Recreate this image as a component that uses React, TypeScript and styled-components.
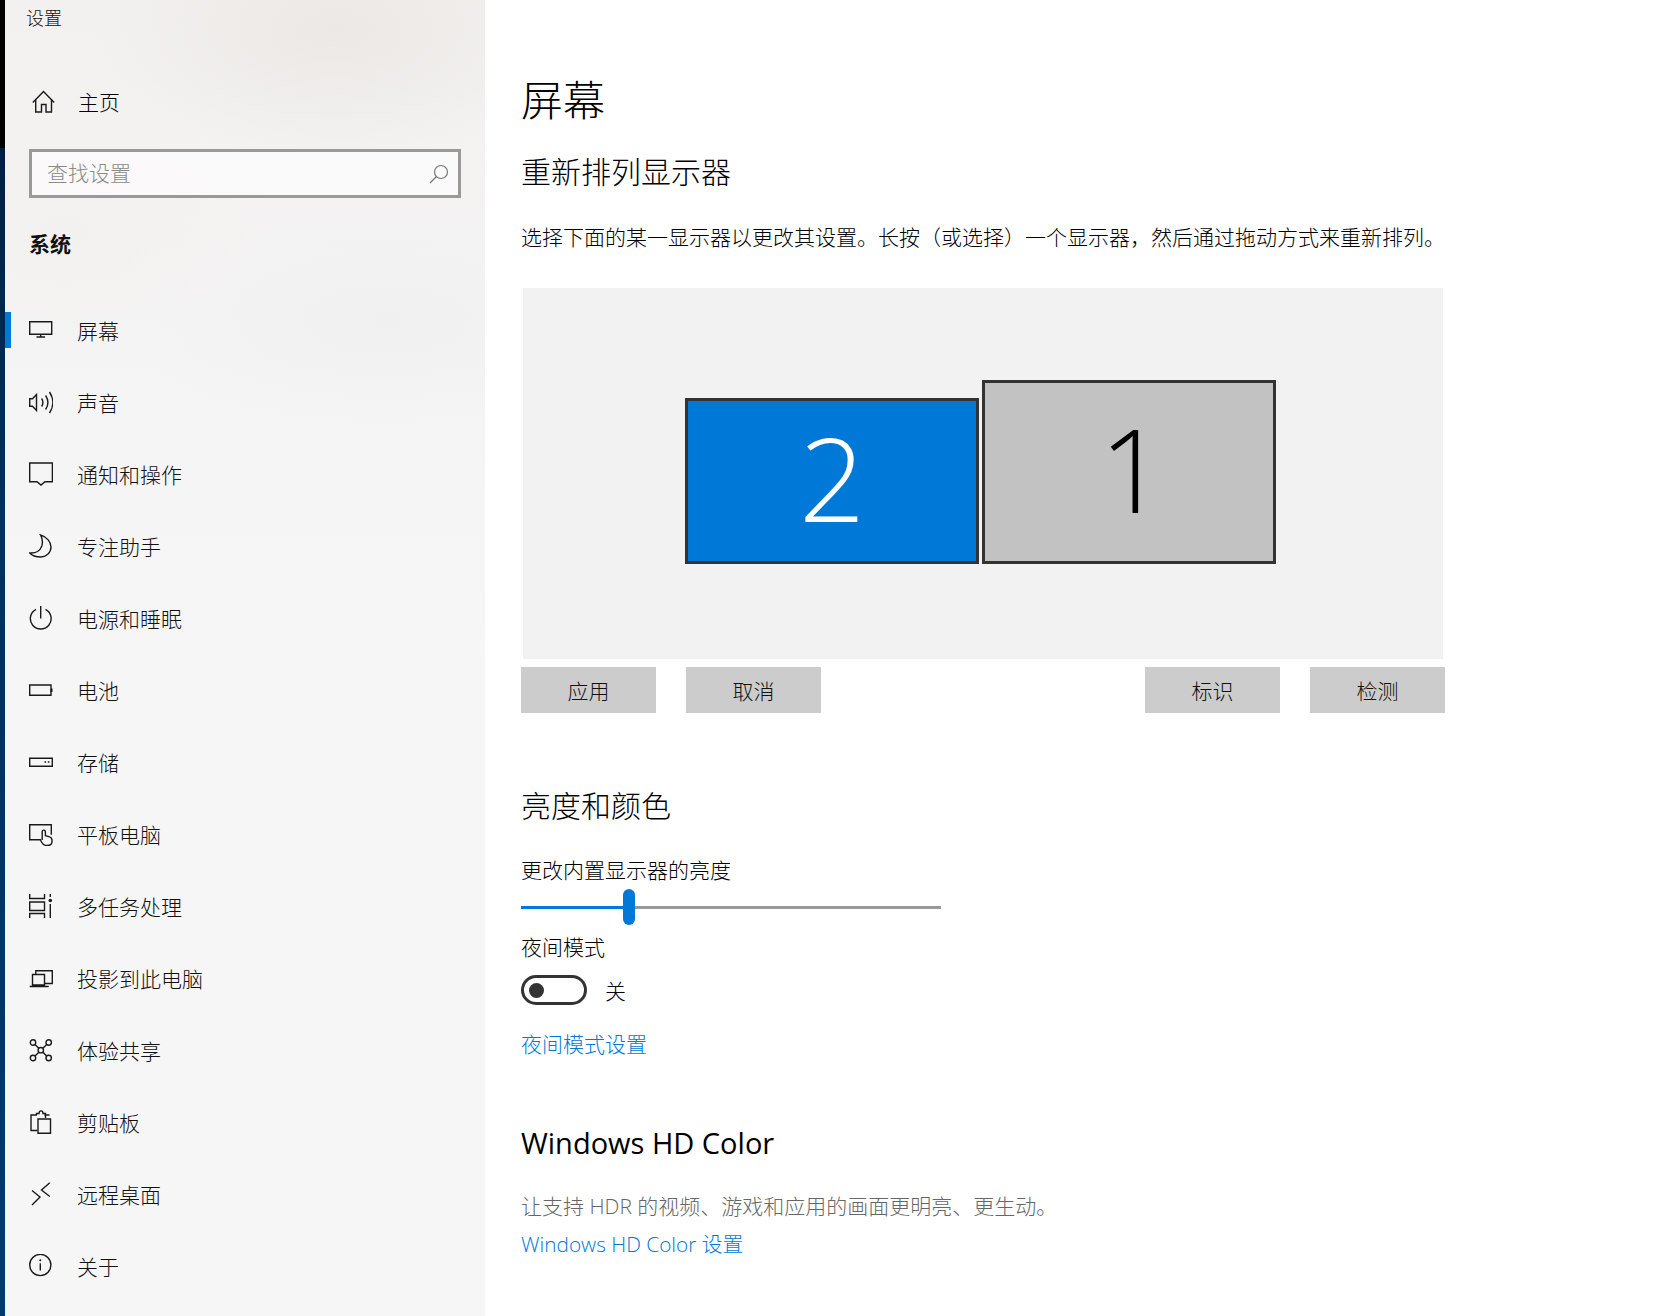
import React from "react";
import styled, { createGlobalStyle } from "styled-components";

const Global = createGlobalStyle`
  html, body { margin: 0; padding: 0; background: #fff; }
  body { font-family: "Noto Sans CJK SC", "Open Sans", sans-serif; font-weight: 300; color: #000; }
  * { box-sizing: border-box; }
`;
const CJK = `"Open Sans", "Noto Sans CJK SC", sans-serif`;

const Page = styled.div`
  width: 1664px; height: 1316px; display: flex; overflow: hidden; background: #fff;
`;
const Strip = styled.div`
  width: 5px; flex: none;
  background: linear-gradient(180deg, #000 0, #000 148px, #001f40 148px, #00305c 500px, #003a6e 1316px);
`;
const Sidebar = styled.aside`
  width: 480px; flex: none; display: flex; flex-direction: column; position: relative;
  background:
    radial-gradient(ellipse 240px 130px at 330px 30px, #ebe8e5 0%, rgba(235,232,229,0) 100%),
    radial-gradient(ellipse 220px 120px at 60px 230px, #f3f1ef 0%, rgba(243,241,239,0) 100%),
    radial-gradient(ellipse 260px 110px at 380px 320px, #f0f0f1 0%, rgba(240,240,241,0) 100%),
    linear-gradient(180deg, #f3f1ef 0%, #f4f4f4 25%, #f6f6f6 50%, #f6f6f7 100%);
`;
const AppTitle = styled.div`
  font-size: 18px; line-height: 34px; height: 36px; padding-left: 21px; color: #111;
`;
const HomeRow = styled.div`
  display: flex; align-items: center; height: 44px; margin-top: 44px; padding-left: 27px; font-size: 21px;
  svg { margin-right: 22px; }
`;
const HomeLabel = styled.span`
  line-height: 42px; height: 44px;
`;
const SearchBox = styled.div`
  margin: 25px 0 0 24px; width: 432px; height: 49px; border: 3px solid #999;
  background: rgba(255,255,255,.6); display: flex; align-items: center; justify-content: space-between;
  padding: 0 9px 0 15px; font-size: 21px; color: #8a8a8a;
`;
const SearchLabel = styled.span`
  line-height: 36px; height: 40px;
`;
const GroupTitle = styled.div`
  margin: 27px 0 0 24px; font-size: 21px; font-weight: 700; line-height: 36px; height: 36px; color: #111;
`;
const Nav = styled.nav`
  margin-top: 33px; display: flex; flex-direction: column;
`;
const NavRow = styled.div<{ $active?: boolean }>`
  height: 72px; display: flex; align-items: center; padding-left: 24px; position: relative; font-size: 21px; color: #111;
  svg { margin-right: 24px; flex: none; }
  &::before {
    content: ""; position: absolute; left: 0; top: 18px; width: 6px; height: 36px;
    background: ${p => (p.$active ? "#0078d7" : "transparent")};
  }
`;
const NavLabel = styled.span`
  line-height: 72px;
`;
const Main = styled.main`
  flex: 1; padding-left: 36px; display: flex; flex-direction: column; align-items: flex-start;
`;
const PageTitle = styled.h1`
  margin: 68px 0 0; font-size: 42px; font-weight: 300; line-height: 60px; height: 60px;
`;
const Heading = styled.h2<{ $top: number }>`
  margin: ${p => p.$top}px 0 0; font-size: 30px; font-weight: 300; line-height: 44px; height: 44px;
`;
const LatinHeading = styled(Heading)`
  font-family: "Open Sans", sans-serif; font-size: 29px; font-weight: 400;
`;
const Body = styled.p<{ $top: number; $grey?: boolean }>`
  margin: ${p => p.$top}px 0 0; font-size: 21px; line-height: 32px; height: 32px; white-space: nowrap;
  color: ${p => (p.$grey ? "#666" : "#000")}; font-family: ${CJK}; font-weight: 300;
`;
const Link = styled.a<{ $top: number; $size?: number }>`
  display: block; margin-top: ${p => p.$top}px; font-size: ${p => p.$size ?? 21}px; line-height: 32px; height: 32px; color: #0078d7; font-family: ${CJK};
`;
const Arrange = styled.div`
  margin: 35px 0 0 2px; width: 920px; height: 371px; background: #f2f2f2;
  display: flex; align-items: flex-start; gap: 3px; padding: 92px 0 0 162px;
`;
const MonitorSlot = styled.div`
  height: 184px; display: flex; align-items: flex-end;
`;
const Monitor = styled.div<{ $on?: boolean; $h: number; $w: number; $nudge?: number }>`
  width: ${p => p.$w}px; height: ${p => p.$h}px; border: 3px solid #333;
  background: ${p => (p.$on ? "#0078d7" : "#c2c2c2")};
  color: ${p => (p.$on ? "#fff" : "#000")};
  display: flex; align-items: center; justify-content: center;
  padding: 0 0 9px ${p => p.$nudge ?? 0}px;
  font: 300 116px/1 "Open Sans", sans-serif;
`;
const ButtonRow = styled.div`
  margin-top: 8px; width: 924px; display: flex; justify-content: space-between;
`;
const ButtonGroup = styled.div`
  display: flex; gap: 30px;
`;
const Btn = styled.div`
  width: 135px; height: 46px; background: #ccc; display: flex; align-items: center; justify-content: center; font-size: 21px; color: #111;
`;
const Slider = styled.div`
  margin-top: 3px; width: 420px; height: 36px; display: flex; align-items: center;
`;
const Fill = styled.div`
  width: 102px; height: 3px; background: #0078d7;
`;
const Thumb = styled.div`
  width: 12px; height: 36px; border-radius: 6px; background: #0078d7;
`;
const Rest = styled.div`
  flex: 1; height: 3px; background: #999;
`;
const ToggleRow = styled.div`
  margin-top: 12px; display: flex; align-items: center; gap: 18px; font-size: 21px; height: 30px;
`;
const Toggle = styled.div`
  width: 66px; height: 30px; border: 3px solid #333; border-radius: 15px; display: flex; align-items: center; padding-left: 5px;
`;
const Knob = styled.div`
  width: 15px; height: 15px; border-radius: 50%; background: #333;
`;

const Ic = ({ children, size = 24 }: { children: React.ReactNode; size?: number }) => (
  <svg width={size} height={size} viewBox="0 0 24 24" fill="none" stroke="#1a1a1a" strokeWidth="1.4">{children}</svg>
);

const icons: Record<string, React.ReactNode> = {
  monitor: <><path d="M.7 3.700h22v12.500H.7z" /><path d="M11.700 16.200v2.600M7.500 19h8.500" /></>,
  sound: <><path d="M.7 8.800h2.800L7.500 4.500v16l-4-4.300H.7z" /><path d="M12.600 8.500c1.600 2.400 1.600 5.600 0 8M16.600 5.500c2.800 4.200 2.800 9.800 0 14M20.500 2c4.300 6.500 4.300 14.500 0 21" /></>,
  notify: <path d="M.7 1h22.700v18.700h-7.400l-4 3.400-4-3.400H.7z" />,
  moon: <path d="M11.500 1C18 3 22 8 22 13c0 6-5 10-10.500 10C7 23 3 21.500.8 19c6 .5 10.500-2.500 12-7 1-3.500.5-8-1.300-11z" />,
  power: <><path d="M7 3.400a10.400 10.400 0 1 0 9.500 0" /><path d="M11.700 0v12.500" /></>,
  battery: <><path d="M.7 7h21.300v10.300H.7z" /><path d="M22.500 10.500v3.500" strokeWidth="2" /></>,
  storage: <><path d="M.7 8.200h22.600v8H.7z" /><path d="M15.500 12h1.600M18.800 12h1.600" /></>,
  tablet: <><path d="M11 17.700H.7V2.700h21.600v10" /><path d="M13.200 18V9.700a1.600 1.600 0 0 1 3.200 0v4l3.600 1c1.800.5 3 1.700 3 3.500v1.300c0 2.800-2.200 4-5 4-3 0-4.500-1.500-5.500-3.500l-1.500-3" /></>,
  multi: <><path d="M.7 0v4.500h14.800V0M.7 8h14.800v8.500H.7zM.7 24v-4.500h14.800V24" /><path d="M21.300 0v3M21.300 10v14" /><circle cx="21.300" cy="6.500" r="1.800" fill="#1a1a1a" stroke="none" /></>,
  project: <><path d="M6.800 8.500V4.700h16.500v12.800H16" /><path d="M3.500 8.500h12v10.500h-12zM.7 20.500h19" /></>,
  share: <><circle cx="4" cy="4.500" r="2.700" /><circle cx="19.700" cy="4.500" r="2.700" /><circle cx="4" cy="20" r="2.700" /><circle cx="19.700" cy="20" r="2.700" /><circle cx="11.800" cy="12.200" r="2.700" /><path d="M6 6.500l3.800 3.800M17.700 6.500l-3.800 3.800M6 18l3.800-3.800M17.700 18l-3.800-3.800" /></>,
  clip: <><path d="M8.500 20.500H2V5h6M15.500 5H20.500" /><path d="M7.500 5V3.500H10c0-3.500 4-3.500 4 0h2.500V8" /><path d="M9 9h12.500v14.200H9z" /></>,
  remote: <><path d="M3 8.500l8 6.500-8 8M20.800.7L12.500 8l8.300 6.500" /></>,
  info: <><circle cx="11.300" cy="11" r="10.600" /><path d="M11.300 9.200v7.200" /><circle cx="11.300" cy="6.300" r="1" fill="#1a1a1a" stroke="none" /></>,
};

const navItems: [string, string][] = [
  ["monitor", "屏幕"], ["sound", "声音"], ["notify", "通知和操作"], ["moon", "专注助手"],
  ["power", "电源和睡眠"], ["battery", "电池"], ["storage", "存储"], ["tablet", "平板电脑"],
  ["multi", "多任务处理"], ["project", "投影到此电脑"], ["share", "体验共享"], ["clip", "剪贴板"],
  ["remote", "远程桌面"], ["info", "关于"],
];

export default function App() {
  return (
    <Page>
      <Global />
      <Strip />
      <Sidebar>
        <AppTitle>设置</AppTitle>
        <HomeRow>
          <Ic>
            <path d="M.8 12.500L11.500 1.500l10.700 11" />
            <path d="M3.700 9.500V22h5.800v-7.500h4.500V22h5.500V9.500" />
          </Ic>
          <HomeLabel>主页</HomeLabel>
        </HomeRow>
        <SearchBox>
          <SearchLabel>查找设置</SearchLabel>
          <svg width="20" height="20" viewBox="0 0 20 20" fill="none" stroke="#777" strokeWidth="1.2">
            <circle cx="12" cy="8" r="6.500" />
            <path d="M7.500 12.500L1 19" />
          </svg>
        </SearchBox>
        <GroupTitle>系统</GroupTitle>
        <Nav>
          {navItems.map(([k, t], i) => (
            <NavRow key={k} $active={i === 0}>
              <Ic>{icons[k]}</Ic>
              <NavLabel>{t}</NavLabel>
            </NavRow>
          ))}
        </Nav>
      </Sidebar>
      <Main>
        <PageTitle>屏幕</PageTitle>
        <Heading $top={20}>重新排列显示器</Heading>
        <Body $top={29}>选择下面的某一显示器以更改其设置。长按（或选择）一个显示器，然后通过拖动方式来重新排列。</Body>
        <Arrange>
          <MonitorSlot>
            <Monitor $on $w={294} $h={166}>2</Monitor>
          </MonitorSlot>
          <MonitorSlot>
            <Monitor $w={294} $h={184} $nudge={7}>1</Monitor>
          </MonitorSlot>
        </Arrange>
        <ButtonRow>
          <ButtonGroup><Btn>应用</Btn><Btn>取消</Btn></ButtonGroup>
          <ButtonGroup><Btn>标识</Btn><Btn>检测</Btn></ButtonGroup>
        </ButtonRow>
        <Heading $top={69}>亮度和颜色</Heading>
        <Body $top={28}>更改内置显示器的亮度</Body>
        <Slider><Fill /><Thumb /><Rest /></Slider>
        <Body $top={6}>夜间模式</Body>
        <ToggleRow><Toggle><Knob /></Toggle>关</ToggleRow>
        <Link $top={23}>夜间模式设置</Link>
        <LatinHeading $top={61}>Windows HD Color</LatinHeading>
        <Body $top={25} $grey>让支持 HDR 的视频、游戏和应用的画面更明亮、更生动。</Body>
        <Link $top={6} $size={20.8}>Windows HD Color 设置</Link>
      </Main>
    </Page>
  );
}
